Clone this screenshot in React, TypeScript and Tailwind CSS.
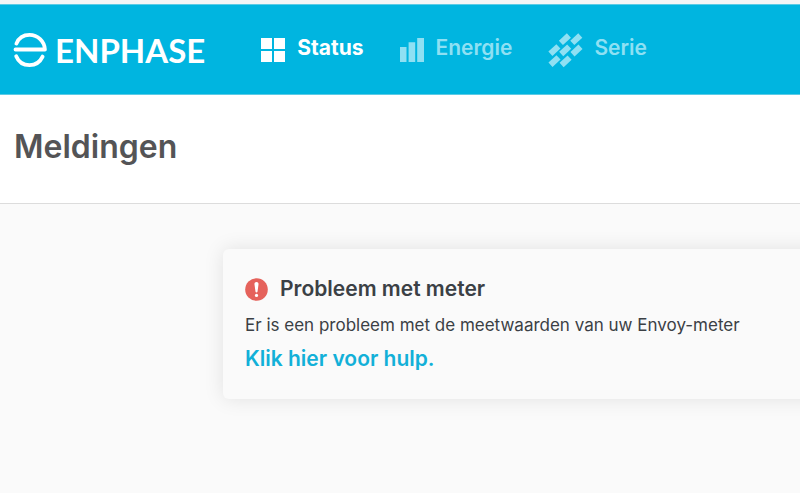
import { useState } from 'react';

const GridIcon = () => (
  <svg className="w-6 h-6 shrink-0" viewBox="0 0 24 24" fill="currentColor" aria-hidden="true">
    <path d="M0 0h11v11H0zM13 0h11v11H13zM0 13h11v11H0zM13 13h11v11H13z" />
  </svg>
);

const BarsIcon = () => (
  <svg className="w-6 h-6 shrink-0" viewBox="0 0 24 24" fill="currentColor" aria-hidden="true">
    <path d="M0 9h6.5v15H0zM8.6 4.300h6.600V24H8.600zM17.200 0h6.800v24h-6.800z" />
  </svg>
);

const ArrayIcon = () => (
  <svg className="w-9 h-9 shrink-0" viewBox="0 0 36 36" stroke="currentColor" strokeWidth="6" fill="none" aria-hidden="true">
    <path d="M12.900 10.900l8-7.400M24.300 10.900l8-7.400M2.400 21.800l8-7.400M13.200 22l8-7.400M24.500 22.200l8-7.400M2.500 32.800l8-7.400M13.600 33l8-7.400" />
  </svg>
);

const Logo = () => (
  <svg className="w-[34px] h-9 shrink-0" viewBox="0 0 34 36" stroke="currentColor" strokeWidth="3.800" strokeLinecap="round" strokeLinejoin="round" fill="none" aria-hidden="true">
    <path d="M3.400 11.600C5.700 6 10.700 2.900 16.500 2.900c8.300 0 15 6.400 15.400 14.600H2.500" />
    <path d="M3.200 24.200C5.500 29.800 10.500 33.100 16.500 33.100c5.700 0 10.600-3.200 13.100-8.500" />
  </svg>
);

const AlertIcon = () => (
  <svg className="w-[23px] h-[23px] shrink-0" viewBox="0 0 23 23" aria-hidden="true">
    <circle cx="11.500" cy="11.500" r="11.300" fill="#e5625b" />
    <path d="M11.500 4c1.500 0 2.200 1 2 2.400l-1 7.300c-.2 1.100-1.800 1.100-2 0l-1-7.300C9.300 5 10 4 11.500 4z" fill="#fff" />
    <circle cx="11.500" cy="17.400" r="1.600" fill="#fff" />
  </svg>
);

const tabs = [
  { name: 'Status', icon: GridIcon, gap: 'gap-3' },
  { name: 'Energie', icon: BarsIcon, gap: 'gap-3' },
  { name: 'Serie', icon: ArrayIcon, gap: 'gap-2.5' },
];

export default function App() {
  const [active, setActive] = useState('Status');

  return (
    <div className="min-h-screen bg-[#fafafa] border-t-4 border-[#f4f5f6] font-['Inter',sans-serif] text-[#3b4045] overflow-x-hidden">
      <header className="flex items-center gap-14 bg-[#00b5e0] border-t border-b border-[#5ccbe5] h-[91px] pl-[13px] text-white">
        <a href="#" className="flex items-center gap-2 font-['Lato',sans-serif] text-[33px] leading-9 font-bold">
          <Logo />
          ENPHASE
        </a>
        <nav className="flex items-center gap-9">
          {tabs.map(({ name, icon: Icon, gap }) => (
            <button
              key={name}
              type="button"
              onClick={() => setActive(name)}
              className={`flex items-center ${gap} text-[21px] leading-6 ${active === name ? 'font-bold' : 'font-semibold text-[#8fe0f3]'}`}
            >
              <Icon />
              <span className="pb-1">{name}</span>
            </button>
          ))}
        </nav>
      </header>

      <section className="bg-white border-b border-[#dcdcdc] px-3.5 pt-8 pb-9">
        <h1 className="text-[32px] leading-10 font-semibold text-[#545456]">Meldingen</h1>
      </section>

      {/* The card runs on past the right edge of the window */}
      <main className="pt-[45px] pl-[223px] -mr-8">
        <article className="rounded-md bg-[#fafafa] px-[22px] py-6 shadow-[0_0_20px_rgba(0,0,0,0.1)]">
          <h2 className="flex items-center gap-3 text-[21px] leading-8 font-semibold">
            <AlertIcon />
            Probleem met meter
          </h2>
          <p className="mt-2 text-[17px] leading-6">Er is een probleem met de meetwaarden van uw Envoy-meter</p>
          <a href="#" className="inline-block mt-1.5 text-[21px] leading-8 font-semibold text-[#12b0d8]">Klik hier voor hulp.</a>
        </article>
      </main>
    </div>
  );
}
